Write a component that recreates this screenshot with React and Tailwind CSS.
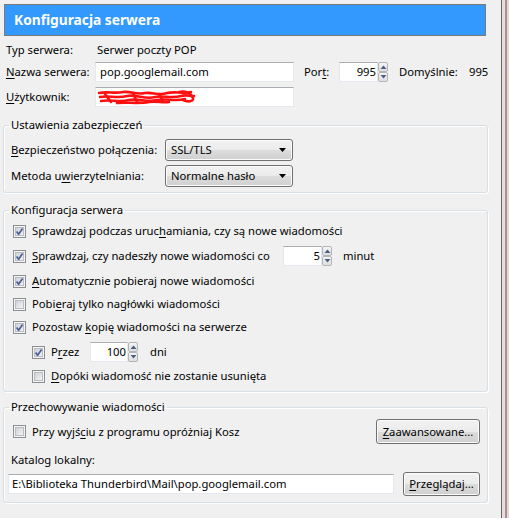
import React from "react";

const FONT = "font-['Noto_Sans',sans-serif] text-[11.25px] leading-[16px] text-black";

function U({ children }) {
  return <span className="underline underline-offset-[2px] decoration-[1px]">{children}</span>;
}

function Check({ checked }) {
  return (
    <svg width="13" height="13" viewBox="0 0 13 13" className="shrink-0">
      <defs>
        <linearGradient id="cbg" x1="0" y1="0" x2="1" y2="1">
          <stop offset="0" stopColor="#cbcfd5" />
          <stop offset="1" stopColor="#f6f6f6" />
        </linearGradient>
      </defs>
      <rect x="0.5" y="0.5" width="12" height="12" fill="#f4f4f4" stroke="#8e8f8f" />
      <rect x="2.5" y="2.5" width="8" height="8" fill="url(#cbg)" stroke="#b9bcc2" />
      {checked && (
        <path d="M3.6 6.4 L5.6 9.2 L9.6 3.4" fill="none" stroke="#4a5f97" strokeWidth="1.7" strokeLinejoin="round" />
      )}
    </svg>
  );
}

function Arrow({ up }) {
  return (
    <svg width="7" height="4" viewBox="0 0 7 4">
      {up ? <polygon points="0.5,4 3.5,0.5 6.5,4" fill="#4d5f7f" /> : <polygon points="0.5,0 3.5,3.5 6.5,0" fill="#4d5f7f" />}
    </svg>
  );
}

function SpinBtn({ up }) {
  return (
    <div className="h-[10px] w-[10px] border border-[#b1b4b9] rounded-[2px] bg-[linear-gradient(#f4f4f4,#dedede)] flex items-center justify-center">
      <Arrow up={up} />
    </div>
  );
}

function Spinner({ value, w }) {
  return (
    <div className="flex h-[20px]">
      <div className={`${w} h-[20px] bg-white border border-[#e3e9ef] border-t-[#abadb3] flex items-center justify-end pr-[1px]`}>
        {value}
      </div>
      <div className="flex flex-col w-[10px] h-[20px]">
        <SpinBtn up />
        <SpinBtn />
      </div>
    </div>
  );
}

function Combo({ text }) {
  return (
    <div className="w-[128px] h-[22px] border border-[#707070] rounded-[3px] bg-[linear-gradient(#f2f2f2_0%,#ebebeb_50%,#dddddd_50%,#cfcfcf_100%)] shadow-[inset_0_0_0_1px_#fbfbfb] flex items-center justify-between pl-[5px] pr-[6px]">
      <span>{text}</span>
      <svg width="7" height="4" viewBox="0 0 7 4">
        <polygon points="0,0 7,0 3.5,4" fill="#000" />
      </svg>
    </div>
  );
}

function Button({ children, w, h }) {
  return (
    <div className={`${w} ${h} border border-[#707070] rounded-[3px] bg-[linear-gradient(#f2f2f2_0%,#ebebeb_50%,#dddddd_50%,#cfcfcf_100%)] shadow-[inset_0_0_0_1px_#fbfbfb] flex items-center justify-center`}>
      {children}
    </div>
  );
}

function Group({ title, className, children }) {
  return (
    <fieldset className={`ml-[3px] w-[485px] border border-[#d5dfe5] rounded-[3px] shadow-[inset_1px_1px_0_#ffffff,1px_1px_0_#ffffff] ${className}`}>
      <legend className="ml-[5px] px-[2px] leading-[16px]">{title}</legend>
      {children}
    </fieldset>
  );
}

function CheckRow({ checked, children, className = "" }) {
  return (
    <div className={`flex items-center h-[20px] gap-[6px] ${className}`}>
      <Check checked={checked} />
      <span>{children}</span>
    </div>
  );
}

function Scribble() {
  return (
    <svg width="100" height="18" viewBox="0 0 100 18" className="ml-[1px]">
      <g fill="none" stroke="#ff1010" strokeWidth="2.6" strokeLinecap="round" strokeLinejoin="round">
        <path d="M2 5 C10 3 18 6 26 4 C34 3 40 7 48 5 C56 4 62 8 70 5 C78 3 86 6 94 4" />
        <path d="M3 9 C12 7 20 11 30 8 C40 6 48 12 58 9 C66 7 74 11 84 8 C90 6 94 9 97 8" />
        <path d="M4 13 C14 11 22 15 32 12 C42 10 50 15 60 12 C70 10 78 14 88 11" />
        <path d="M20 15 C30 14 42 16 52 14 C60 13 66 15 72 14" />
        <path d="M82 4 C88 2 95 6 96 10 C97 14 90 14 86 12" />
        <path d="M8 6 L14 14 M36 5 L40 14 M62 6 L66 13" />
      </g>
    </svg>
  );
}

export default function App() {
  return (
    <div className={`w-[509px] h-[518px] bg-[#f0f0f0] flex overflow-hidden ${FONT}`}>
      <div className="w-[501px] flex flex-col">
        <div className="mt-[4px] ml-[4px] w-[482px] h-[32px] bg-[#3399ff] border border-[#7a7a7a] flex items-center pl-[9px]">
          <span className="text-white font-bold text-[13.75px] leading-[18px]">Konfiguracja serwera</span>
        </div>

        <div className="mt-[4px] h-[20px] flex items-center pl-[6px]">
          <span className="w-[91px]">Typ serwera:</span>
          <span>Serwer poczty POP</span>
        </div>

        <div className="mt-[2px] h-[20px] flex items-center pl-[6px]">
          <span className="w-[89px]"><U>N</U>azwa serwera:</span>
          <div className="w-[199px] h-[20px] bg-white border border-[#e3e9ef] border-t-[#abadb3] flex items-center pl-[4px]">pop.googlemail.com</div>
          <span className="ml-[10px] w-[35px]">Por<U>t</U>:</span>
          <Spinner value="995" w="w-[39px]" />
          <span className="ml-[11px] w-[70px]">Domyślnie:</span>
          <span>995</span>
        </div>

        <div className="mt-[5px] h-[20px] flex items-center pl-[6px]">
          <span className="w-[89px]"><U>U</U>żytkownik:</span>
          <div className="w-[199px] h-[20px] bg-white border border-[#e3e9ef] border-t-[#abadb3] flex items-center">
            <Scribble />
          </div>
        </div>

        <Group title="Ustawienia zabezpieczeń" className="mt-[10px]">
          <div className="pl-[7px] pt-[6px] pb-[5px] flex flex-col gap-[4px]">
            <div className="flex items-center h-[22px]">
              <span className="w-[154px]"><U>B</U>ezpieczeństwo połączenia:</span>
              <Combo text="SSL/TLS" />
            </div>
            <div className="flex items-center h-[22px]">
              <span className="w-[154px]">Metoda u<U>w</U>ierzytelniania:</span>
              <Combo text="Normalne hasło" />
            </div>
          </div>
        </Group>

        <Group title="Konfiguracja serwera" className="mt-[9px]">
          <div className="pl-[9px] pt-[3px] pb-[5px] flex flex-col">
            <CheckRow checked>Sprawdzaj podczas uruc<U>h</U>amiania, czy są nowe wiadomości</CheckRow>
            <div className="mt-[5px] flex items-center h-[20px] gap-[6px]">
              <Check checked />
              <span className="w-[245px]"><U>S</U>prawdzaj, czy nadeszły nowe wiadomości co</span>
              <Spinner value="5" w="w-[39px]" />
              <span className="ml-[5px]">minut</span>
            </div>
            <CheckRow checked className="mt-[5px]"><U>A</U>utomatycznie pobieraj nowe wiadomości</CheckRow>
            <CheckRow className="mt-[3px]">Pobi<U>e</U>raj tylko nagłówki wiadomości</CheckRow>
            <CheckRow checked className="mt-[3px]">Pozostaw <U>k</U>opię wiadomości na serwerze</CheckRow>
            <div className="mt-[5px] ml-[19px] flex items-center h-[20px] gap-[6px]">
              <Check checked />
              <span className="w-[33px]">P<U>r</U>zez</span>
              <Spinner value="100" w="w-[38px]" />
              <span className="ml-[6px]">dni</span>
            </div>
            <CheckRow className="mt-[4px] ml-[19px]"><U>D</U>opóki wiadomość nie zostanie usunięta</CheckRow>
          </div>
        </Group>

        <Group title="Przechowywanie wiadomości" className="mt-[7px]">
          <div className="pt-[4px] pb-[6px] pr-[7px] flex flex-col">
            <div className="flex items-center justify-between h-[25px] pl-[9px]">
              <div className="flex items-center gap-[6px]">
                <Check />
                <span>Przy wyjś<U>c</U>iu z programu opróżniaj Kosz</span>
              </div>
              <Button w="w-[104px]" h="h-[25px]"><span><U>Z</U>aawansowane...</span></Button>
            </div>
            <div className="mt-[8px] h-[16px] pl-[7px] flex items-center">Katalog lokalny:</div>
            <div className="mt-[4px] flex items-center justify-between h-[24px] pl-[4px]">
              <div className="w-[386px] h-[20px] bg-white border border-[#e3e9ef] border-t-[#abadb3] flex items-center pl-[3px]">E:\Biblioteka Thunderbird\Mail\pop.googlemail.com</div>
              <Button w="w-[77px]" h="h-[24px]"><span><U>P</U>rzeglądaj...</span></Button>
            </div>
          </div>
        </Group>
      </div>
      <div className="w-[8px] h-full flex border-l border-[#6e6666]">
        <div className="w-[3px] bg-[#eadcdc]" />
        <div className="w-[2px] bg-[#a09494]" />
        <div className="w-[2px] bg-[#e6d6d6]" />
      </div>
    </div>
  );
}
